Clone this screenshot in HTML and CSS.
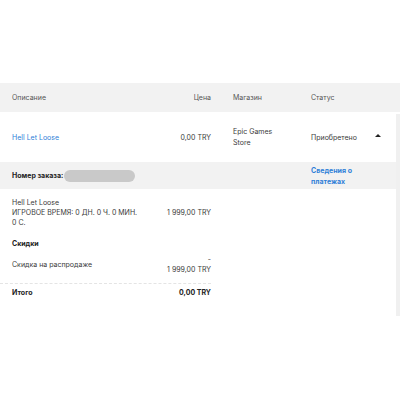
FILE: index.html
```html
<!DOCTYPE html>
<html lang="ru">
<head>
<meta charset="utf-8">
<title>История транзакций</title>
<link rel="stylesheet" href="styles.css">
</head>
<body>
<div class="page">
  <div class="thead grid">
    <div class="c-desc">Описание</div>
    <div class="c-price">Цена</div>
    <div class="c-store">Магазин</div>
    <div class="c-status">Статус</div>
    <div class="c-toggle"></div>
  </div>

  <div class="card">
    <div class="row grid">
      <div class="c-desc"><a class="link" href="#">Hell Let Loose</a></div>
      <div class="c-price">0,00 TRY</div>
      <div class="c-store">Epic Games<br>Store</div>
      <div class="c-status">Приобретено</div>
      <div class="c-toggle"><span class="caret"></span></div>
    </div>

    <div class="order grid">
      <div class="order-no"><b>Номер заказа:</b><span class="pill"></span></div>
      <div class="c-status"><a class="link strong" href="#">Сведения о<br>платежах</a></div>
    </div>

    <div class="details">
      <div class="line">
        <div class="name">Hell Let Loose<br>ИГРОВОЕ ВРЕМЯ: 0 ДН. 0 Ч. 0 МИН.<br>0 С.</div>
        <div class="amount">1 999,00 TRY</div>
      </div>
      <div class="section-title">Скидки</div>
      <div class="line discount">
        <div class="name">Скидка на распродаже</div>
        <div class="amount">-<br>1 999,00 TRY</div>
      </div>
      <div class="total line">
        <div class="name">Итого</div>
        <div class="amount">0,00 TRY</div>
      </div>
    </div>
  </div>
</div>
</body>
</html>
```
FILE: styles.css
```css
* { box-sizing: border-box; }

body {
  margin: 0;
  background: #fff;
  font-family: Inter, "Noto Sans", sans-serif;
  font-size: 7px;
  color: #3a3a3a;
}

.page {
  padding-top: 83px;
}

.grid {
  display: grid;
  grid-template-columns: 130px 69px 100px 1fr 36px;
  padding-left: 12px;
  align-items: center;
}

.c-price { text-align: right; }
.c-store { padding-left: 22px; line-height: 11px; }

.thead {
  height: 29px;
  background: #f2f2f2;
  color: #555;
}

.card {
  width: 396px;
  background: #fff;
  box-shadow: 4px 2px 0 #f0f0f0;
}

.row {
  height: 50px;
}

.link {
  color: #2f7fd8;
  text-decoration: none;
}
.link.strong { font-weight: 700; line-height: 11px; display: block; }

.caret {
  display: block;
  width: 0;
  height: 0;
  border-left: 3px solid transparent;
  border-right: 3px solid transparent;
  border-bottom: 3px solid #222;
  margin-left: 15px;
  margin-top: -3px;
}

.order {
  height: 27px;
  background: #f2f2f2;
  grid-template-columns: 299px 1fr;
}
.order-no {
  display: flex;
  align-items: center;
  color: #222;
}
.pill {
  display: inline-block;
  width: 71px;
  height: 12px;
  border-radius: 6px;
  background: #c9c9c9;
  margin-left: 1px;
}

.details {
  width: 223px;
  padding: 9px 12px 18px 12px;
  line-height: 10px;
}

.line {
  display: flex;
  justify-content: space-between;
  align-items: center;
}
.name { width: 130px; }
.amount { text-align: right; }

.section-title {
  font-weight: 700;
  color: #222;
  margin-top: 11px;
}

.discount {
  margin-top: 6px;
  padding-bottom: 8px;
  border-bottom: 1px dashed #e4e4e4;
  margin-left: -12px;
  padding-left: 12px;
}

.total {
  margin-top: 4px;
  font-weight: 700;
  color: #222;
}
```
